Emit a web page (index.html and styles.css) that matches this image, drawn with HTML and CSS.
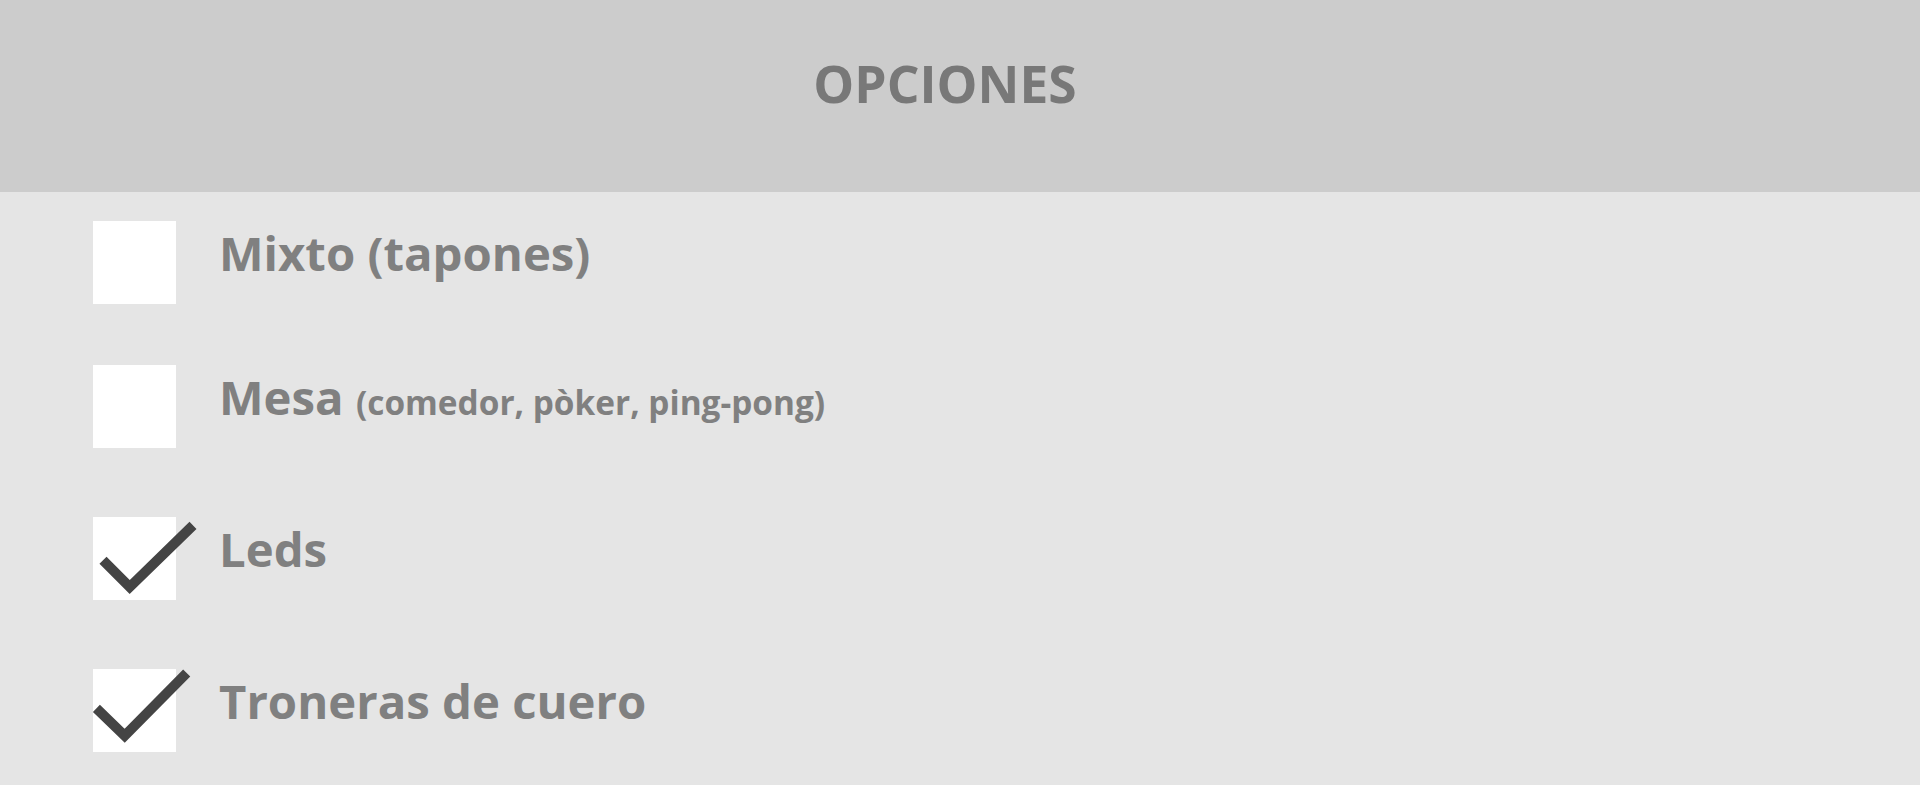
FILE: index.html
```html
<!DOCTYPE html>
<html lang="es">
<head>
<meta charset="utf-8">
<title>Opciones</title>
<link rel="stylesheet" href="styles.css">
</head>
<body>
<header class="header">
  <h1 class="title">OPCIONES</h1>
</header>
<ul class="options">
  <li class="option option--first">
    <span class="box"></span>
    <span class="label">Mixto (tapones)</span>
  </li>
  <li class="option">
    <span class="box"></span>
    <span class="label">Mesa <small class="sub">(comedor, pòker, ping-pong)</small></span>
  </li>
  <li class="option">
    <span class="box">
      <svg class="check" viewBox="0 0 83 83" width="83" height="83"><polyline points="10,43.3 36.7,70 100,8.3"/></svg>
    </span>
    <span class="label">Leds</span>
  </li>
  <li class="option">
    <span class="box">
      <svg class="check" viewBox="0 0 83 83" width="83" height="83"><polyline points="3.4,39.3 31.7,66.8 93.7,4"/></svg>
    </span>
    <span class="label">Troneras de cuero</span>
  </li>
</ul>
</body>
</html>
```

FILE: styles.css
```css
html, body {
  margin: 0;
  padding: 0;
}

body {
  background: #e5e5e5;
  font-family: "Open Sans", "Liberation Sans", sans-serif;
  font-weight: 700;
  color: #808080;
  height: 785px;
  overflow: hidden;
}

.header {
  background: #cccccc;
  height: 192px;
  display: flex;
  justify-content: center;
}

.title {
  margin: 0;
  padding: 48px 30px 0 0;
  font-size: 51.5px;
  line-height: 70px;
  font-weight: 700;
  color: #787878;
}

.options {
  list-style: none;
  margin: 0;
  padding: 29px 0 0 93px;
}

.option {
  display: flex;
  align-items: flex-start;
  gap: 43px;
  height: 83px;
  margin-bottom: 69px;
}

.option--first {
  margin-bottom: 61px;
}

.box {
  position: relative;
  flex: none;
  width: 83px;
  height: 83px;
  background: #ffffff;
}

.check {
  position: absolute;
  left: 0;
  top: 0;
  overflow: visible;
}

.check polyline {
  fill: none;
  stroke: #444444;
  stroke-width: 10;
  stroke-linecap: butt;
  stroke-linejoin: miter;
}

.label {
  font-size: 47.3px;
  line-height: 48px;
  margin-top: 8px;
  white-space: nowrap;
}

.sub {
  font-size: 33.4px;
  font-weight: 700;
}
```
